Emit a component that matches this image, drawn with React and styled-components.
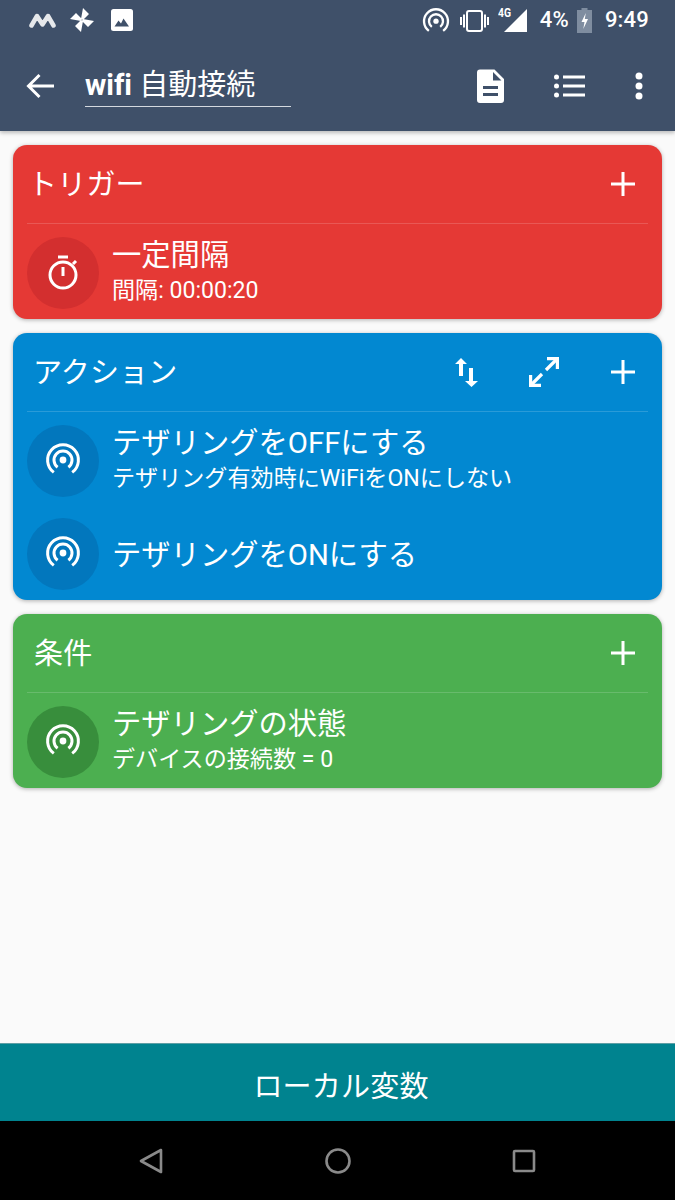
import React from "react";
import styled, { createGlobalStyle } from "styled-components";

const FONT = `Roboto, "Noto Sans CJK JP", sans-serif`;

const GlobalStyle = createGlobalStyle`
  html, body {
    margin: 0;
    padding: 0;
    background: #fafafa;
    font-family: ${FONT};
  }
  * { box-sizing: border-box; }
`;

const Screen = styled.div`
  width: 675px;
  height: 1200px;
  display: flex;
  flex-direction: column;
  overflow: hidden;
  background: #fafafa;
`;

const AppBar = styled.header`
  height: 131px;
  background: #3f5069;
  box-shadow: 0 2px 4px rgba(0, 0, 0, 0.25);
  position: relative;
  z-index: 1;
  flex: none;
`;

const StatusBar = styled.div`
  height: 40px;
  display: flex;
  align-items: center;
  padding: 0 26px 0 29px;
  color: #fff;
`;

const NoticeIcons = styled.div`
  display: flex;
  align-items: center;
  flex: 1;
`;

const SystemIcons = styled.div`
  display: flex;
  align-items: center;
`;

const StatusText = styled.span`
  font-size: 22px;
  font-weight: 500;
  line-height: 40px;
  margin-left: ${(p) => p.$left}px;
  letter-spacing: 0.2px;
`;

const Spacer = styled.span`
  width: ${(p) => p.$w}px;
`;

const Nudge = styled.span`
  display: block;
  margin-top: ${(p) => p.$y}px;
`;

const ToolBar = styled.div`
  height: 91px;
  display: flex;
  align-items: center;
  padding: 0 32px 0 26px;
`;

const TitleField = styled.div`
  width: 206px;
  height: 46px;
  margin: 0 0 4px 31px;
  border-bottom: 1.5px solid #d4d9df;
  color: #fff;
  font-size: 29px;
  line-height: 48px;
  white-space: nowrap;
  font-variant-ligatures: none;
`;

const BoldWord = styled.span`
  font-weight: 700;
`;

const ToolActions = styled.div`
  margin-left: auto;
  display: flex;
  align-items: center;
  gap: 50px;
`;

const Content = styled.main`
  flex: 1;
  padding: 14px 13px 0;
  display: flex;
  flex-direction: column;
  gap: 14px;
`;

const Card = styled.section`
  background: ${(p) => p.$color};
  border-radius: 14px;
  box-shadow: 0 1px 4px rgba(0, 0, 0, 0.3);
  padding: 0 14px 10px;
  color: #fff;
`;

const CardHeader = styled.div`
  height: 79px;
  display: flex;
  align-items: center;
  border-bottom: 1px solid rgba(255, 255, 255, 0.16);
  padding: 0 12px 0 ${(p) => p.$indent}px;
`;

const CardTitle = styled.h2`
  margin: 3px auto 0 0;
  font-size: 29px;
  font-weight: 400;
  line-height: 1;
  letter-spacing: 0.2px;
`;

const HeaderActions = styled.div`
  display: flex;
  align-items: center;
  gap: 51px;
`;

const Rows = styled.div`
  padding-top: 13px;
  display: flex;
  flex-direction: column;
  gap: 21px;
`;

const Row = styled.div`
  height: 72px;
  display: flex;
  align-items: center;
  gap: 13px;
`;

const IconCircle = styled.div`
  width: 72px;
  height: 72px;
  flex: none;
  border-radius: 50%;
  background: ${(p) => p.$color};
  display: flex;
  align-items: center;
  justify-content: center;
`;

const RowText = styled.div`
  display: flex;
  flex-direction: column;
`;

const RowTitle = styled.div`
  font-size: 29.3px;
  line-height: 36px;
  padding-top: ${(p) => (p.$single ? 2 : 0)}px;
  white-space: nowrap;
`;

const RowSub = styled.div`
  font-size: 23.1px;
  line-height: 35px;
  padding-bottom: 1px;
  white-space: nowrap;
`;

const BottomButton = styled.button`
  flex: none;
  height: 78px;
  border: 0;
  border-top: 1px solid #5d9fa5;
  background: #00838f;
  color: #fff;
  font-family: ${FONT};
  font-size: 29px;
  letter-spacing: 0.2px;
  padding: 3px 0 0 7px;
`;

const NavBar = styled.nav`
  flex: none;
  height: 79px;
  background: #000;
  display: flex;
  align-items: center;
  padding: 0 139px;
  justify-content: space-between;
`;

const Svg = ({ w, h = w, vb, children }) => (
  <svg width={w} height={h} viewBox={vb || `0 0 ${w} ${h}`} fill="none" style={{ display: "block", flex: "none" }}>
    {children}
  </svg>
);

const Hotspot = ({ size = 36, color = "#fff", sw = 3 }) => (
  <Svg w={size} vb="0 0 36 36">
    <circle cx="18" cy="17" r="3.4" fill={color} />
    <path d="M12.6 24.2a9 9 0 1 1 10.8 0" stroke={color} strokeWidth={sw} />
    <path d="M8.8 29.4a15.4 15.4 0 1 1 18.4 0" stroke={color} strokeWidth={sw} />
  </Svg>
);

const Plus = () => (
  <Svg w={26}>
    <path d="M13 1v24M1 13h24" stroke="#fff" strokeWidth="3" />
  </Svg>
);

function Trigger() {
  return (
    <Card $color="#e53935">
      <CardHeader $indent={1}>
        <CardTitle>トリガー</CardTitle>
        <Plus />
      </CardHeader>
      <Rows>
        <Row>
          <IconCircle $color="#d32f2f">
            <Svg w={32} h={38}>
              <path d="M11 3h10" stroke="#fff" strokeWidth="3" />
              <circle cx="16" cy="21" r="13" stroke="#fff" strokeWidth="3" />
              <path d="M16 13v9" stroke="#fff" strokeWidth="3" />
              <path d="M26 10l3-3" stroke="#fff" strokeWidth="3" />
            </Svg>
          </IconCircle>
          <RowText>
            <RowTitle>一定間隔</RowTitle>
            <RowSub>間隔: 00:00:20</RowSub>
          </RowText>
        </Row>
      </Rows>
    </Card>
  );
}

function Action() {
  return (
    <Card $color="#0288d1">
      <CardHeader $indent={6}>
        <CardTitle>アクション</CardTitle>
        <HeaderActions>
          <Svg w={23} h={29}>
            <path d="M6 0l6 6H8v12H4V6H0z" fill="#fff" />
            <path d="M14 10h4v13h5l-6.5 6-6.5-6h4z" fill="#fff" />
          </Svg>
          <Svg w={30} h={30}>
            <path d="M18 1.6h10.4V12" stroke="#fff" strokeWidth="3.2" />
            <path d="M27.5 2.5L17 13" stroke="#fff" strokeWidth="3.2" />
            <path d="M12 28.4H1.6V18" stroke="#fff" strokeWidth="3.2" />
            <path d="M2.5 27.5L13 17" stroke="#fff" strokeWidth="3.2" />
          </Svg>
          <Plus />
        </HeaderActions>
      </CardHeader>
      <Rows>
        <Row>
          <IconCircle $color="#0277bd">
            <Hotspot />
          </IconCircle>
          <RowText>
            <RowTitle>テザリングをOFFにする</RowTitle>
            <RowSub>テザリング有効時にWiFiをONにしない</RowSub>
          </RowText>
        </Row>
        <Row>
          <IconCircle $color="#0277bd">
            <Hotspot />
          </IconCircle>
          <RowText>
            <RowTitle $single>テザリングをONにする</RowTitle>
          </RowText>
        </Row>
      </Rows>
    </Card>
  );
}

function Condition() {
  return (
    <Card $color="#4caf50">
      <CardHeader $indent={7}>
        <CardTitle>条件</CardTitle>
        <Plus />
      </CardHeader>
      <Rows>
        <Row>
          <IconCircle $color="#388e3c">
            <Hotspot />
          </IconCircle>
          <RowText>
            <RowTitle>テザリングの状態</RowTitle>
            <RowSub>デバイスの接続数 = 0</RowSub>
          </RowText>
        </Row>
      </Rows>
    </Card>
  );
}

export default function App() {
  return (
    <>
      <GlobalStyle />
      <Screen>
        <AppBar>
          <StatusBar>
            <NoticeIcons>
              <Svg w={27} h={16}>
                <path d="M2.5 13.5L8 4l5.5 8.5L19 4l5.5 9.5" stroke="#e6e8eb" strokeWidth="4.5" strokeLinejoin="round" strokeLinecap="round" />
              </Svg>
              <Spacer $w={14} />
              <Svg w={24}>
                <path d="M11 11L13 0l6 6-6 6zM13 11l11 2-6 6-6-6zM13 13l-2 11-6-6 6-6zM11 13L0 11l6-6 6 6z" fill="#fff" />
              </Svg>
              <Spacer $w={17} />
              <Svg w={22}>
                <rect width="22" height="22" rx="2.5" fill="#fff" />
                <path d="M3.5 17.5l4-6 2.5 3 2.5-5 5.5 8z" fill="#3f5069" />
              </Svg>
            </NoticeIcons>
            <SystemIcons>
              <Nudge $y={3}>
                <Hotspot size={28} sw={3} />
              </Nudge>
              <Spacer $w={10} />
              <Nudge $y={2}>
                <Svg w={29} h={22}>
                  <rect x="7" y="1" width="15" height="20" rx="2" stroke="#fff" strokeWidth="2" />
                  <path d="M1 7v8M4 4.5v13M25 4.5v13M28 7v8" stroke="#fff" strokeWidth="2" />
                </Svg>
              </Nudge>
              <Spacer $w={9} />
              <Svg w={29} h={30}>
                <text x="0" y="12" fontSize="12.5" fontWeight="700" fill="#fff" fontFamily="Roboto, sans-serif" textLength="13" lengthAdjust="spacingAndGlyphs">4G</text>
                <path d="M29 4v23H6z" fill="#fff" />
              </Svg>
              <StatusText $left={13}>4%</StatusText>
              <Spacer $w={8} />
              <Svg w={15} h={26}>
                <path d="M4.5 1h6v2H15v23H0V3h4.5z" fill="#7f8da0" />
                <path d="M8.8 6l-4.3 9h3l-1.2 7 4.7-10H7.8z" fill="#fff" />
              </Svg>
              <StatusText $left={13}>9:49</StatusText>
            </SystemIcons>
          </StatusBar>
          <ToolBar>
            <Svg w={28} h={26}>
              <path d="M28 13H3M13.5 2L2.5 13l11 11" stroke="#fff" strokeWidth="3" />
            </Svg>
            <TitleField>
              <BoldWord>wifi</BoldWord> 自動接続
            </TitleField>
            <ToolActions>
              <Svg w={27} h={34}>
                <path fillRule="evenodd" clipRule="evenodd" d="M3 0.5h14.5L27 10v21a3 3 0 0 1-3 3H3a3 3 0 0 1-3-3V3.5a3 3 0 0 1 3-3zM16 3v8.5h8.5zM6 17v3h15v-3zM6 24v3h15v-3z" fill="#fff" />
              </Svg>
              <Svg w={31} h={24}>
                <circle cx="2.5" cy="3" r="2.5" fill="#fff" />
                <circle cx="2.5" cy="12" r="2.5" fill="#fff" />
                <circle cx="2.5" cy="21" r="2.5" fill="#fff" />
                <path d="M9 3h22M9 12h22M9 21h22" stroke="#fff" strokeWidth="3.2" />
              </Svg>
              <Svg w={8} h={28}>
                <circle cx="4" cy="4" r="3.5" fill="#fff" />
                <circle cx="4" cy="14" r="3.5" fill="#fff" />
                <circle cx="4" cy="24" r="3.5" fill="#fff" />
              </Svg>
            </ToolActions>
          </ToolBar>
        </AppBar>
        <Content>
          <Trigger />
          <Action />
          <Condition />
        </Content>
        <BottomButton>ローカル変数</BottomButton>
        <NavBar>
          <Svg w={24} h={26}>
            <path d="M22 2L2 13l20 11z" stroke="#8a8a8a" strokeWidth="2.6" strokeLinejoin="round" />
          </Svg>
          <Svg w={26}>
            <circle cx="13" cy="13" r="11.5" stroke="#8a8a8a" strokeWidth="2.6" />
          </Svg>
          <Svg w={24}>
            <rect x="2" y="2" width="20" height="20" rx="1" stroke="#8a8a8a" strokeWidth="2.6" />
          </Svg>
        </NavBar>
      </Screen>
    </>
  );
}
